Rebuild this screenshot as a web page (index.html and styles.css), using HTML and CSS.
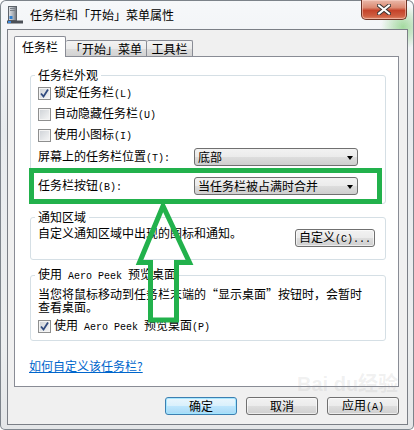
FILE: index.html
```html
<!DOCTYPE html>
<html lang="zh-CN">

<head>
    <meta charset="UTF-8">
    <meta name="viewport" content="width=device-width, initial-scale=1.0">
    <title>任务栏和「开始」菜单属性</title>

    <link rel="stylesheet" href="styles.css">
</head>

<body>

    <div class="window">
        <!-- Title bar -->
        <div class="titlebar">
            <svg class="app-icon" viewBox="0 0 16 18" width="16" height="18">
                <defs>
                    <linearGradient id="tower" x1="0" x2="1" y1="0" y2="0">
                        <stop offset="0" stop-color="#e4e7ea" />
                        <stop offset="0.6" stop-color="#a9afb6" />
                        <stop offset="1" stop-color="#6d737a" />
                    </linearGradient>
                </defs>
                <rect x="1.5" y="0.5" width="8" height="14" fill="url(#tower)" stroke="#5d636a" />
                <rect x="3" y="2" width="5" height="1" fill="#7b8189" />
                <rect x="3" y="4" width="5" height="1" fill="#7b8189" />
                <rect x="2.5" y="10" width="3" height="3" fill="#2f7fd0" />
                <rect x="0" y="14.5" width="16" height="3" fill="#4b5057" />
                <rect x="1" y="15" width="3" height="2" fill="#3b8be0" />
            </svg>
            <span class="title">任务栏和「开始」菜单属性</span>
            <div class="close">
                <svg viewBox="0 0 14 11" width="14" height="11">
                    <path d="M2 1.5 L12 9.5 M12 1.5 L2 9.5" stroke="#3a3533" stroke-width="4" stroke-linecap="square" />
                    <path d="M2 1.5 L12 9.5 M12 1.5 L2 9.5" stroke="#ffffff" stroke-width="2" stroke-linecap="square" />
                </svg>
            </div>
        </div>

        <!-- Client area -->
        <div class="client">
            <div class="tabs">
                <div class="tab active">任务栏</div>
                <div class="tab tab-start">「开始」菜单</div>
                <div class="tab tab-tools">工具栏</div>
            </div>

            <div class="panel">
                <fieldset class="group group-look">
                    <legend>任务栏外观</legend>
                    <div class="row">
                        <span class="cb checked"></span><span>锁定任务栏<span class="en">(L)</span></span>
                    </div>
                    <div class="row">
                        <span class="cb"></span><span>自动隐藏任务栏<span class="en">(U)</span></span>
                    </div>
                    <div class="row">
                        <span class="cb"></span><span>使用小图标<span class="en">(I)</span></span>
                    </div>
                    <div class="row row-pos">
                        <span class="select-label">屏幕上的任务栏位置<span class="en">(T):</span></span>
                        <div class="combo"><span>底部</span><span class="arrow"></span></div>
                    </div>
                    <div class="row row-buttons">
                        <span class="select-label">任务栏按钮<span class="en">(B):</span></span>
                        <div class="combo"><span>当任务栏被占满时合并</span><span class="arrow"></span></div>
                    </div>
                </fieldset>

                <fieldset class="group group-notify">
                    <legend>通知区域</legend>
                    <div class="notify-row">
                        <span class="notify-text">自定义通知区域中出现的图标和通知。</span>
                        <button class="btn btn-custom">自定义<span class="en">(C)...</span></button>
                    </div>
                </fieldset>

                <fieldset class="group group-peek">
                    <legend>使用<span class="en"> Aero Peek </span>预览桌面</legend>
                    <p class="peek-text">当您将鼠标移动到任务栏末端的“显示桌面”按钮时，会暂时查看桌面。</p>
                    <div class="row row-peek">
                        <span class="cb checked"></span><span>使用<span class="en"> Aero Peek </span>预览桌面<span class="en">(P)</span></span>
                    </div>
                </fieldset>

                <a class="help-link" href="#">如何自定义该任务栏?</a>
            </div>

            <div class="dialog-buttons">
                <button class="btn btn-default">确定</button>
                <button class="btn">取消</button>
                <button class="btn">应用<span class="en">(A)</span></button>
            </div>
        </div>

        <!-- Hand-drawn highlight on the screenshot -->
        <svg class="annot" viewBox="0 0 414 430" width="414" height="430">
            <rect x="31.5" y="170.5" width="348" height="31" fill="none" stroke="#22b14c" stroke-width="5" />
            <polygon points="163,206 139.5,262.5 150.5,262.5 150.5,320 176.5,320 176.5,262.5 189.5,262.5"
                fill="none" stroke="#22b14c" stroke-width="5" />
        </svg>

        <div class="watermark">Bai du经验</div>
    </div>

</body>

</html>
```

FILE: styles.css
```css
* {
    box-sizing: border-box;
    padding: 0;
    margin: 0;
}

body {
    width: 414px;
    height: 430px;
    overflow: hidden;
    background: #ffffff;
    font-family: "Noto Sans CJK SC", "Liberation Sans", sans-serif;
    font-size: 12px;
    color: #000;
}

.en {
    font-family: "Liberation Mono", "DejaVu Sans Mono", monospace;
    font-size: 10px;
    white-space: pre;
}

/* Window frame */
.window {
    position: relative;
    width: 414px;
    height: 430px;
    border: 1px solid rgba(80, 88, 98, 0.7);
    border-radius: 6px 6px 5px 5px;
    background:
        radial-gradient(circle at 402px 26px, rgba(110, 200, 100, 0.6), rgba(110, 200, 100, 0) 22px),
        linear-gradient(#f6f8fa, #e8ebee 30%, #eceeef 80%, #e4e6e8);
}

.titlebar {
    height: 28px;
    display: flex;
    align-items: center;
    padding-left: 6px;
}

.app-icon {
    width: 16px;
    height: 18px;
    margin-right: 7px;
}

.title {
    line-height: 14px;
}

.close {
    margin-left: auto;
    margin-right: 6px;
    align-self: flex-start;
    margin-top: -1px;
    width: 46px;
    height: 20px;
    border: 1px solid #6e3426;
    border-top: none;
    border-radius: 0 0 5px 5px;
    background: linear-gradient(#eab9aa, #dc8a72 40%, #c5432a 55%, #cf5f42 85%, #e08a6c);
    box-shadow: inset 0 0 0 1px rgba(255, 220, 210, 0.5);
    display: flex;
    align-items: center;
    justify-content: center;
}

/* Client area */
.client {
    margin: 0 5px 0 6px;
    height: 396px;
    border: 1px solid #7b7f86;
    background: #f0f0f0;
    padding: 6px 8px 0 6px;
}

.tabs {
    display: flex;
    align-items: flex-end;
    height: 20px;
}

.tab {
    height: 16px;
    line-height: 14px;
    padding-top: 1px;
    text-align: center;
    border: 1px solid #898c95;
    border-bottom: none;
    border-radius: 2px 2px 0 0;
    background: linear-gradient(#f3f3f3, #ebebeb 50%, #dddddd 51%, #d2d2d2);
}

.tab.active {
    position: relative;
    z-index: 1;
    width: 52px;
    height: 21px;
    margin-bottom: -1px;
    padding-top: 3px;
    background: #ffffff;
}

.tab-start {
    width: 81px;
    border-left: none;
}

.tab-tools {
    width: 46px;
    border-left: none;
}

.panel {
    width: 385px;
    height: 331px;
    border: 1px solid #898c95;
    background: #ffffff;
    padding: 11px 12px 0 15px;
}

/* Group boxes */
.group {
    width: 356px;
    border: 1px solid #d5dfe5;
    border-radius: 3px;
    padding-left: 7px;
}

.group legend {
    line-height: 14px;
    padding: 0 3px;
    margin-left: -3px;
}

.group-look {
    padding-top: 1px;
    padding-bottom: 7px;
}

.group-notify {
    margin-top: 6px;
    padding-top: 2px;
    padding-bottom: 12px;
}

.group-peek {
    margin-top: 7px;
    padding-top: 3px;
    padding-bottom: 4px;
}

.row {
    display: flex;
    align-items: center;
    height: 21px;
    line-height: 14px;
    white-space: nowrap;
}

.row-pos {
    height: 20px;
    margin-top: 1px;
}

.row-buttons {
    height: 20px;
    margin-top: 9px;
}

.row-peek {
    height: 20px;
    margin-top: 3px;
}

/* Checkbox */
.cb {
    width: 13px;
    height: 13px;
    margin-right: 3px;
    border: 1px solid #8e8f8f;
    background: linear-gradient(135deg, #cdd1d6, #f7f7f7);
    box-shadow: inset 0 0 0 1px #f4f4f4;
}

.cb.checked {
    background:
        url("data:image/svg+xml;utf8,<svg xmlns='http://www.w3.org/2000/svg' viewBox='0 0 11 11'><path d='M2 5.5 L4.5 8.5 L9 1.5' fill='none' stroke='%23304a7e' stroke-width='1.8'/></svg>") center / 11px 11px no-repeat,
        linear-gradient(135deg, #cdd1d6, #f7f7f7);
}

/* Combo box */
.select-label {
    width: 156px;
}

.combo {
    width: 164px;
    height: 18px;
    display: flex;
    align-items: center;
    justify-content: space-between;
    padding: 0 4px 0 3px;
    line-height: 14px;
    border: 1px solid #707070;
    border-radius: 3px;
    background: linear-gradient(#f2f2f2, #ebebeb 50%, #dddddd 51%, #cfcfcf);
}

.arrow {
    width: 0;
    height: 0;
    border-left: 3px solid transparent;
    border-right: 3px solid transparent;
    border-top: 4px solid #000;
    margin-top: 1px;
}

/* Notification area */
.notify-row {
    display: flex;
    align-items: flex-start;
    justify-content: space-between;
    height: 21px;
}

.notify-text {
    line-height: 14px;
}

.btn {
    font: inherit;
    color: #000;
    height: 18px;
    line-height: 14px;
    border: 1px solid #707070;
    border-radius: 3px;
    background: linear-gradient(#f2f2f2, #ebebeb 50%, #dddddd 51%, #cfcfcf);
    box-shadow: inset 0 0 0 1px rgba(255, 255, 255, 0.6);
}

.btn-custom {
    width: 80px;
    margin-top: 3px;
    margin-right: 10px;
}

.peek-text {
    width: 328px;
    line-height: 13px;
}

.help-link {
    display: block;
    width: max-content;
    margin-top: 18px;
    margin-left: -1px;
    line-height: 14px;
    color: #0066cc;
}

/* Dialog buttons */
.dialog-buttons {
    display: flex;
    justify-content: flex-end;
    gap: 9px;
    margin-top: 10px;
}

.dialog-buttons .btn {
    width: 72px;
}

.btn-default {
    border-color: #3c7fb1;
    background: linear-gradient(#eaf6fd, #d9f0fc 50%, #bee6fd 51%, #a7d9f5);
    box-shadow: inset 0 0 0 1px rgba(160, 230, 255, 0.9);
}

/* Overlays */
.annot {
    position: absolute;
    left: -1px;
    top: -1px;
    pointer-events: none;
}

.watermark {
    position: absolute;
    left: 296px;
    top: 372px;
    font-family: "Liberation Sans", "Noto Sans CJK SC", sans-serif;
    font-size: 20px;
    font-weight: bold;
    line-height: 22px;
    color: rgba(150, 150, 150, 0.14);
    pointer-events: none;
}
```
